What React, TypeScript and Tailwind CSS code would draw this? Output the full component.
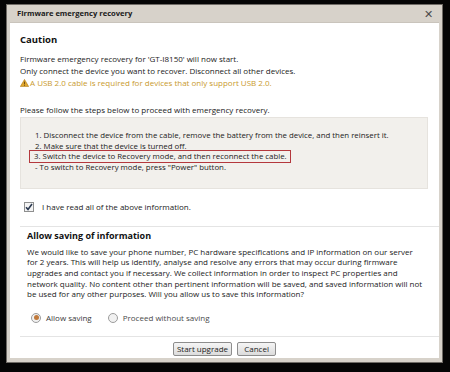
const font = { fontFamily: '"Open Sans", "Noto Sans", sans-serif' };

const steps = [
  "1. Disconnect the device from the cable, remove the battery from the device, and then reinsert it.",
  "2. Make sure that the device is turned off.",
];

const consent = [
  "We would like to save your phone number, PC hardware specifications and IP information on our server",
  "for 2 years. This will help us identify, analyse and resolve any errors that may occur during firmware",
  "upgrades and contact you if necessary. We collect information in order to inspect PC properties and",
  "network quality. No content other than pertinent information will be saved, and saved information will not",
  "be used for any other purposes. Will you allow us to save this information?",
];

function WarnIcon() {
  return (
    <svg width="9" height="8" viewBox="0 0 9 8" className="mr-[1px] shrink-0">
      <path d="M4.5 0.4 L8.7 7.6 L0.3 7.6 Z" fill="#e0a82e" stroke="#b07a18" strokeWidth="0.6" />
      <rect x="4.1" y="2.6" width="0.8" height="2.8" fill="#5a3a08" />
      <rect x="4.1" y="6" width="0.8" height="0.8" fill="#5a3a08" />
    </svg>
  );
}

function Radio({ on, label }: { on?: boolean; label: string }) {
  return (
    <div className="flex items-center gap-[5px]">
      <div className="w-[10px] h-[10px] rounded-full border border-[#9c9c9c] bg-[#f1f1f1] flex items-center justify-center">
        {on && <div className="w-[5px] h-[5px] rounded-full bg-[#c07a3c]" />}
      </div>
      <span className={on ? "text-[#3a3a3a]" : "text-[#4a4a4a]"}>{label}</span>
    </div>
  );
}

export default function App() {
  return (
    <div className="w-[450px] h-[372px] bg-[#050505] pl-[6px] pt-[4px]" style={font}>
      <div className="w-[437px] h-[359px] border border-[#6f6b66] bg-[#d7d2ca] flex flex-col px-[3px] pb-[4px]">
        {/* title bar */}
        <div className="h-[17px] flex items-center justify-between pl-[7px] pr-[6px] shrink-0">
          <span className="text-[7.6px] font-bold text-[#1a1a1a]">Firmware emergency recovery</span>
          <span className="text-[11px] leading-none text-[#4a4a4a]">✕</span>
        </div>

        <div className="flex-1 bg-white flex flex-col text-[8px] text-[#222] border-t border-[#c9c4bc]">
          <div className="px-[10px] pt-[10px]">
            <div className="text-[9.5px] leading-[14px] font-bold text-[#111]">Caution</div>
            <div className="mt-[6px] leading-[12px]">
              <div>Firmware emergency recovery for 'GT-I8150' will now start.</div>
              <div>Only connect the device you want to recover. Disconnect all other devices.</div>
              <div className="flex items-center text-[#c99a2e]">
                <WarnIcon />A USB 2.0 cable is required for devices that only support USB 2.0.
              </div>
            </div>
            <div className="mt-[15px] leading-[12px]">Please follow the steps below to proceed with emergency recovery.</div>

            <div className="mt-[1px] mr-[1px] bg-[#f2f0ec] border border-[#e6e3de] pl-[14px] pt-[12px] pb-[15px] text-[7.85px] leading-[10.7px]">
              {steps.map((s) => (
                <div key={s}>{s}</div>
              ))}
              <div className="w-fit -ml-[6px] -my-[1px] pl-[4px] pr-[3px] border-[1.5px] border-[#b4383d] h-[12.7px] leading-[9px] flex items-center">
                3. Switch the device to Recovery mode, and then reconnect the cable.
              </div>
              <div>- To switch to Recovery mode, press "Power" button.</div>
            </div>

            <div className="mt-[12px] flex items-center gap-[8px] pl-[4px]">
              <div className="w-[10px] h-[10px] border border-[#8e8f8f] bg-[#f4f4f4] flex items-center justify-center">
                <svg width="8" height="8" viewBox="0 0 8 8">
                  <path d="M1 4.2 L3 6.4 L7 1" fill="none" stroke="#2c3a52" strokeWidth="1.6" />
                </svg>
              </div>
              <span>I have read all of the above information.</span>
            </div>
          </div>

          <div className="mt-[13px] ml-[10px] border-t border-[#e4e4e4]" />

          <div className="px-[17px] pt-[2px]">
            <div className="text-[9px] leading-[14px] font-bold text-[#111]">Allow saving of information</div>
            <div className="mt-[4px] text-[8px] leading-[10.6px] whitespace-nowrap">
              {consent.map((l) => (
                <div key={l}>{l}</div>
              ))}
            </div>
            <div className="mt-[12px] flex items-center gap-[16px] pl-[4px]">
              <Radio on label="Allow saving" />
              <Radio label="Proceed without saving" />
            </div>
          </div>

          <div className="mt-[12px] ml-[10px] border-t border-[#e4e4e4]" />

          <div className="flex justify-center gap-[5px] pt-[5px]">
            <button className="h-[14px] px-[3px] rounded-[2px] border border-[#8d8d8d] bg-gradient-to-b from-[#f5f5f5] to-[#dcdcdc] text-[8px] leading-none text-[#222]">
              Start upgrade
            </button>
            <button className="h-[14px] w-[39px] rounded-[2px] border border-[#8d8d8d] bg-gradient-to-b from-[#f5f5f5] to-[#dcdcdc] text-[8px] leading-none text-[#222]">
              Cancel
            </button>
          </div>
        </div>
      </div>
    </div>
  );
}
